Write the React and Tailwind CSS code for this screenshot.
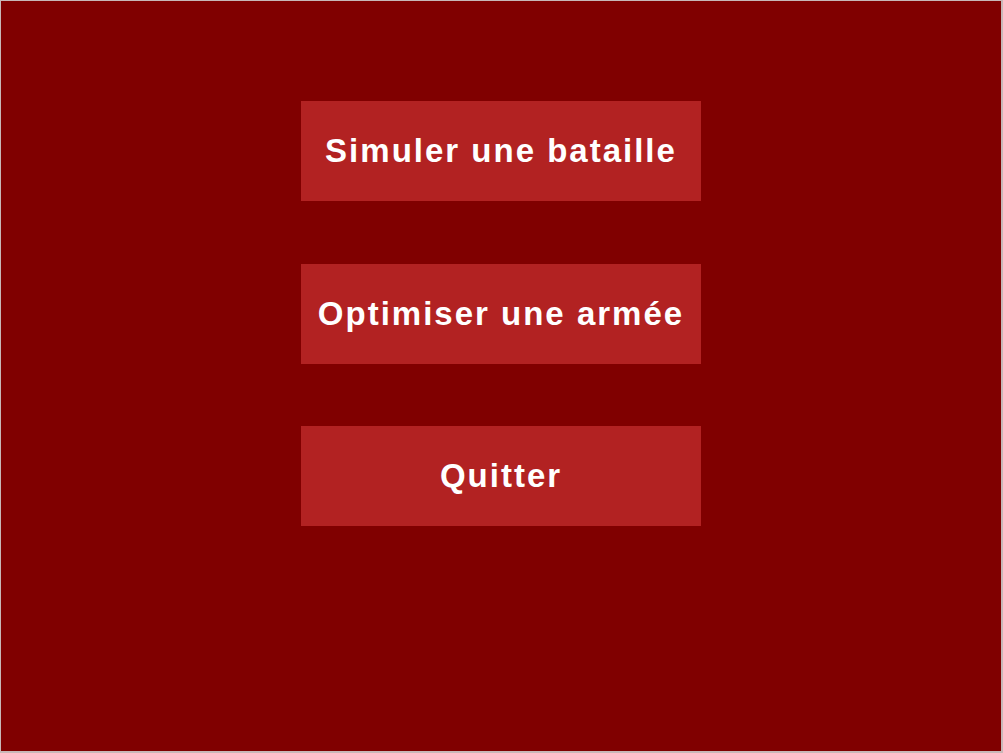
export default function App() {
  const items = [
    { t: "Simuler une bataille", c: "mt-0" },
    { t: "Optimiser une armée", c: "mt-[63px]" },
    { t: "Quitter", c: "mt-[62px]" },
  ];
  return (
    <div className="w-[1003px] h-[753px] bg-[#c8b8b8] pt-px pl-px pr-[2px] pb-[2px]">
      <div className="w-full h-full bg-[#800000] flex flex-col items-center pt-[100px]">
        {items.map(({ t, c }) => (
          <button
            key={t}
            className={`${c} w-[400px] h-[100px] bg-[#b22222] text-white font-bold text-[33px] tracking-[2px] flex items-center justify-center`}
            style={{ fontFamily: '"Liberation Sans", Arial, sans-serif' }}
          >
            {t}
          </button>
        ))}
      </div>
    </div>
  );
}
